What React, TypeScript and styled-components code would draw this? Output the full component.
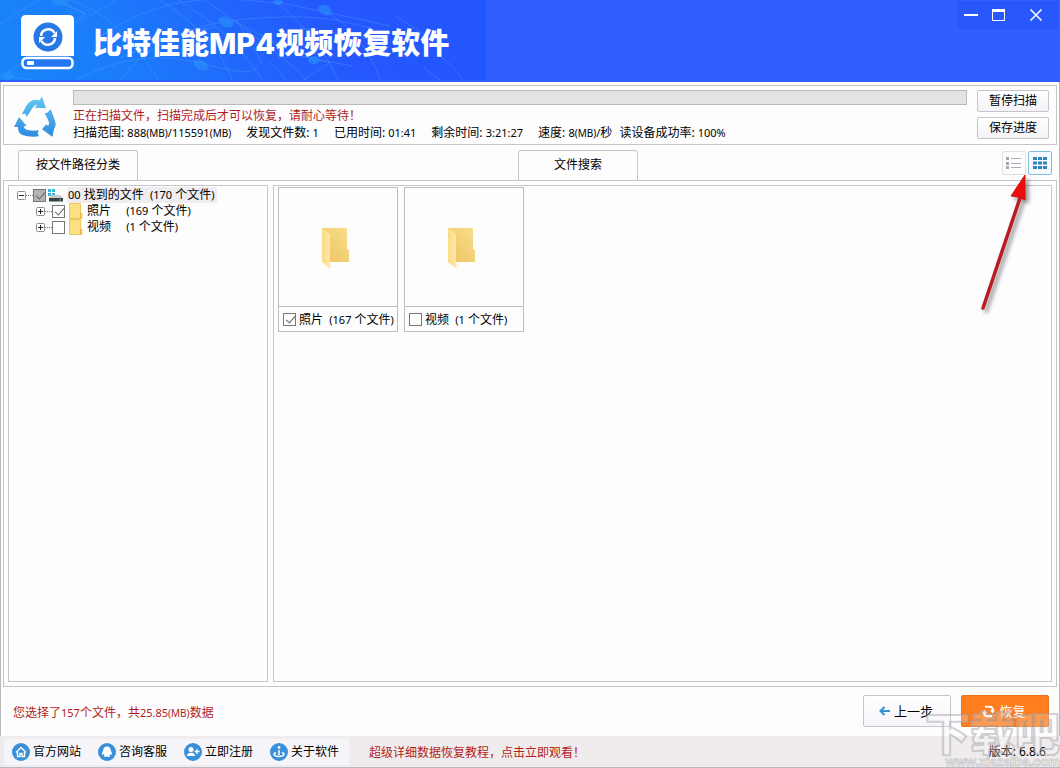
import React from "react";
import styled, { createGlobalStyle } from "styled-components";

const LINE = "#c6c6c8";
const RED = "#b01c1c";

const GlobalStyle = createGlobalStyle`
  * { box-sizing: border-box; }
  body { margin: 0; background: #fdfdfe; }
  body, button, input {
    font-family: "Noto Sans", "Noto Sans CJK SC", sans-serif;
    font-size: 12px;
    line-height: 16px;
    color: #000;
  }
  h1, p, ul { margin: 0; padding: 0; }
  ul { list-style: none; }
`;

const Window = styled.div`
  position: relative;
  display: flex;
  flex-direction: column;
  min-height: 100vh;
  overflow: hidden;
  background: #fdfdfe;
`;

const Header = styled.header`
  position: relative;
  display: flex;
  justify-content: space-between;
  align-items: flex-start;
  height: 82px;
  background: #305eff;
`;

const Banner = styled.div`
  position: relative;
  display: flex;
  align-items: center;
  gap: 18px;
  width: 486px;
  height: 80px;
  padding: 4px 0 0 20px;
  background: linear-gradient(62deg, #1985f8 0%, #1b7cfb 25%, #2263fc 52%, #2457fd 70%, #2456ff 100%);
`;

const Pattern = styled.svg`
  position: absolute;
  inset: 0;
`;

const Logo = styled.svg`
  position: relative;
  flex: none;
`;

const Title = styled.h1`
  position: relative;
  font-family: "Noto Sans CJK SC", sans-serif;
  font-size: 29px;
  font-weight: 900;
  line-height: 40px;
  white-space: nowrap;
  color: #fff;
`;

const TitleFormat = styled.span`
  font-family: Inter, sans-serif;
  font-weight: 800;
`;

const WindowControls = styled.div`
  display: flex;
  margin: 1px 2px 0 0;
  background: #2858fb;
`;

const ControlButton = styled.button<{ $width: number }>`
  display: flex;
  align-items: center;
  justify-content: center;
  width: ${(p) => p.$width}px;
  height: 28px;
  padding: 0;
  border: 0;
  background: none;
`;

const Body = styled.div`
  flex: 1;
  display: flex;
  flex-direction: column;
  padding: 3px 2px 0;
  border: solid #b9b9c2;
  border-width: 0 1px;
`;

const ScanPanel = styled.section`
  display: flex;
  height: 60px;
  padding: 4px 7px 0 8px;
  border: 1px solid ${LINE};
`;

const RecycleIcon = styled.svg`
  flex: none;
  margin-top: 5px;
`;

const ScanInfo = styled.div`
  flex: 1;
  margin-left: 15px;
`;

const ProgressTrack = styled.div`
  height: 15px;
  margin-bottom: 3px;
  border: 1px solid #b9b9b9;
  background: #e5e3e6;
`;

const Notice = styled.p`
  color: ${RED};
  white-space: nowrap;
`;

const Stats = styled.ul`
  display: flex;
  gap: 15px;
  margin-top: 1px;
  white-space: nowrap;
`;

const SpeedStats = styled.li`
  display: flex;
  gap: 7px;
`;

const Num = styled.span`
  font-size: 11px;
`;

const Unit = styled.span`
  font-size: 10px;
`;

const ScanButtons = styled.div`
  display: flex;
  flex-direction: column;
  gap: 5px;
  width: 72px;
  margin-left: 10px;
`;

const SmallButton = styled.button`
  height: 22px;
  padding: 0;
  border: 1px solid #c4c4ca;
  border-radius: 2px;
  background: linear-gradient(#fff, #f3f3f8);
`;

const TabBar = styled.div`
  display: flex;
  justify-content: space-between;
  margin: 5px 5px -1px 15px;
`;

const Tabs = styled.div`
  display: flex;
  gap: 380px;
`;

const Tab = styled.button<{ $active?: boolean }>`
  width: 120px;
  height: 31px;
  padding: 0 0 2px;
  border: 1px solid ${LINE};
  border-bottom-color: ${(p) => (p.$active ? "#fdfdfe" : LINE)};
  border-radius: 3px 3px 0 0;
  background: #fdfdfe;
`;

const ViewSwitch = styled.div`
  display: flex;
  gap: 2px;
  padding-top: 1px;
`;

const ViewButton = styled.button<{ $active?: boolean }>`
  display: flex;
  align-items: center;
  justify-content: center;
  width: 24px;
  height: 24px;
  padding: 0;
  border: 1px solid ${(p) => (p.$active ? "#85bde0" : "#dfdfe2")};
  border-radius: 2px;
  background: ${(p) => (p.$active ? "#f4faff" : "#fdfdfe")};
`;

const Browser = styled.main`
  flex: 1;
  display: grid;
  grid-template-columns: 260px 1fr;
  gap: 5px;
  padding: 4px;
  border: 1px solid ${LINE};
`;

const TreePane = styled.nav`
  padding: 1px 8px;
  border: 1px solid ${LINE};
`;

const TreeRow = styled.li<{ $child?: boolean }>`
  display: flex;
  align-items: center;
  height: 16px;
  padding-left: ${(p) => (p.$child ? 19 : 0)}px;
  white-space: nowrap;
`;

const Expander = styled.button`
  flex: none;
  display: block;
  width: 9px;
  height: 9px;
  padding: 0;
  border: 0;
  background: none;
  svg { display: block; }
`;

const Dots = styled.span`
  width: 7px;
  border-top: 1px dotted #777;
`;

const CheckBox = styled.input.attrs({ type: "checkbox" })<{ $partial?: boolean }>`
  appearance: none;
  flex: none;
  position: relative;
  width: 13px;
  height: 13px;
  margin: 0;
  border: 1px solid #777;
  background: ${(p) => (p.$partial ? "#b4b4b4" : "#fff")};
  &:checked::after {
    content: "";
    position: absolute;
    left: 4px;
    top: 0;
    width: 4px;
    height: 8px;
    border: solid #666;
    border-width: 0 1px 1px 0;
    transform: rotate(40deg);
  }
`;

const TreeLabel = styled.label<{ $selected?: boolean }>`
  display: flex;
  align-items: center;
  gap: 4px;
  margin-left: 2px;
  span.text {
    height: 16px;
    padding: 0 2px 0 1px;
    white-space: pre;
    background: ${(p) => (p.$selected ? "#efedf0" : "none")};
  }
`;

const ChildLabel = styled(TreeLabel)`
  gap: 3px;
  margin-left: 4px;
`;

const Count = styled.span`
  margin-left: 12px;
`;

const FilePane = styled.section`
  display: flex;
  flex-wrap: wrap;
  align-content: flex-start;
  gap: 6px;
  padding: 1px 4px;
  border: 1px solid ${LINE};
`;

const Card = styled.label`
  display: block;
  width: 120px;
  border: 1px solid #bdbdbd;
`;

const Thumb = styled.span`
  display: flex;
  align-items: center;
  justify-content: center;
  height: 118px;
  padding: 2px 4px 0 0;
`;

const CardCaption = styled.span`
  display: flex;
  align-items: center;
  gap: 3px;
  height: 25px;
  padding: 0 4px;
  border-top: 1px solid #bdbdbd;
  white-space: pre;
  span { padding-top: 1px; }
`;

const Actions = styled.div`
  display: flex;
  align-items: center;
  justify-content: space-between;
  height: 49px;
  padding: 0 8px 1px 10px;
`;

const Selection = styled(Notice)`
  padding-top: 3px;
`;

const ActionButtons = styled.div`
  display: flex;
  gap: 10px;
`;

const ActionButton = styled.button<{ $primary?: boolean }>`
  display: flex;
  align-items: center;
  justify-content: center;
  gap: 4px;
  width: 88px;
  height: 32px;
  padding: 0 2px 0 0;
  border: 1px solid ${(p) => (p.$primary ? "#e9741d" : "#c4c4ca")};
  border-radius: 2px;
  background: ${(p) => (p.$primary ? "#ff7d1f" : "linear-gradient(#fff, #f5f5fb)")};
  color: ${(p) => (p.$primary ? "#fff" : "#000")};
  font-size: 13px;
`;

const Footer = styled.footer`
  display: flex;
  align-items: center;
  height: 32px;
  padding: 0 14px 0 4px;
  border-bottom: 1px solid #b9b9c2;
  background: #f0eced;
`;

const FooterLinks = styled.nav`
  display: flex;
  gap: 17px;
  width: 345px;
  height: 26px;
  padding-left: 8px;
  background: #f5f5f9;
`;

const FooterLink = styled.a`
  display: flex;
  align-items: center;
  gap: 3px;
  color: #000;
  text-decoration: none;
  white-space: nowrap;
`;

const PromoLink = styled.a`
  margin-left: 20px;
  padding-top: 2px;
  color: ${RED};
  text-decoration: none;
`;

const Version = styled.span`
  margin-left: auto;
`;

const Pointer = styled.svg`
  position: absolute;
  top: 170px;
  right: 26px;
  pointer-events: none;
`;

const Watermark = styled.div`
  position: absolute;
  right: 0;
  bottom: 0;
  display: flex;
  flex-direction: column;
  align-items: flex-end;
  pointer-events: none;
  white-space: nowrap;
`;

const WatermarkName = styled.span`
  font-family: "Noto Sans CJK SC", sans-serif;
  font-size: 45px;
  font-weight: 900;
  line-height: 48px;
  color: rgba(255, 255, 255, 0.22);
  -webkit-text-stroke: 2px rgba(165, 165, 170, 0.5);
`;

const WatermarkUrl = styled.span`
  font-family: "Liberation Sans", sans-serif;
  font-size: 13px;
  font-weight: 700;
  line-height: 12px;
  color: rgba(255, 255, 255, 0.7);
  -webkit-text-stroke: 1px rgba(165, 165, 170, 0.5);
`;

const FolderSmall = () => (
  <svg width="14" height="16" viewBox="0 0 14 16">
    <path d="M0.5 0.5h11v9l1.5 1v5H0.5z" fill="#fbdf83" stroke="#edc65c" />
    <path d="M11.5 10v5" stroke="#e3b84a" />
  </svg>
);

const FolderLarge = ({ id }: { id: string }) => (
  <svg width="30" height="42" viewBox="0 0 30 42">
    <defs>
      <linearGradient id={`${id}-back`} x1="0" x2="1" y1="1" y2="0">
        <stop offset="0" stopColor="#eec35f" />
        <stop offset="1" stopColor="#f8de8d" />
      </linearGradient>
      <linearGradient id={`${id}-front`} x1="0" x2="1">
        <stop offset="0" stopColor="#fbdc85" />
        <stop offset="1" stopColor="#fde9ad" />
      </linearGradient>
    </defs>
    <path d="M1 1h25v21l2 1v11l1 1H9z" fill={`url(#${id}-back)`} />
    <path d="M1 1l8 6v29l1 5-3-1-6-5z" fill={`url(#${id}-front)`} />
  </svg>
);

const Expand = ({ open, label }: { open?: boolean; label: string }) => (
  <Expander aria-label={label}>
    <svg width="9" height="9" viewBox="0 0 9 9" fill="none">
      <rect x="0.5" y="0.5" width="8" height="8" rx="1" fill="#fff" stroke="#8c8c8c" />
      <path d={open ? "M2 4.5h5" : "M2 4.5h5M4.5 2v5"} stroke="#223" />
    </svg>
  </Expander>
);

const footerLinks = [
  {
    label: "官方网站",
    icon: <path d="M4 9.5L9 4.5l5 5M5.5 9v4.500h2.500v-3h2v3h2.500V9" fill="none" stroke="#fff" strokeWidth="1.400" />,
  },
  {
    label: "咨询客服",
    icon: <path d="M9 3.500c-2.600 0-3.800 1.900-3.800 4.200C4.300 9 3.700 10.600 4.200 12l1.300-.9c.2.700.6 1.200 1.100 1.700-.5.200-.7.500-.7.900h6.200c0-.4-.2-.7-.7-.9.500-.5.900-1 1.100-1.700l1.300.9c.5-1.400-.1-3-1-4.300 0-2.300-1.200-4.200-3.800-4.200z" fill="#fff" />,
  },
  {
    label: "立即注册",
    icon: (
      <>
        <circle cx="7" cy="6.500" r="2.500" fill="#fff" />
        <path d="M2.800 13c0-4.500 8.400-4.500 8.400 0z" fill="#fff" />
        <path d="M13 6v5M10.500 8.500h5" stroke="#fff" strokeWidth="1.400" />
      </>
    ),
  },
  {
    label: "关于软件",
    icon: (
      <>
        <circle cx="9" cy="4.500" r="1.400" fill="#fff" />
        <path d="M9 7v5M6 9.500c-4 1.500-1.500 4 3 4s7-2.500 3-4" fill="none" stroke="#fff" strokeWidth="1.500" />
      </>
    ),
  },
];

export default function App() {
  return (
    <Window>
      <GlobalStyle />
      <Header>
        <Banner>
          <Pattern width="486" height="80" viewBox="0 0 486 80" fill="none" aria-hidden="true">
            <g stroke="#54a4ff" strokeOpacity="0.35">
              <path d="M0 24L22 10 40 0M56 0L86 14 46 44M86 14L60 2M0 76L34 80M6 74L60 34 116 0" />
              <path d="M70 0C110 12 140 50 158 80M98 38C150 2 200 -8 280 4M120 80C150 42 190 22 260 18S340 22 372 28" />
              <path d="M160 0C190 20 220 45 232 80M178 0C215 22 240 45 262 80M205 0C225 14 290 60 306 80" />
              <path d="M76 80C110 62 150 50 205 64S250 70 262 62L240 26M92 42L110 30M120 58L172 34 216 27" />
              <path d="M276 2L326 12 390 26M276 2C300 20 325 50 338 80M326 12C350 25 370 50 380 80M310 60L330 62 304 80M270 62L286 80" />
              <path d="M395 16L440 44M424 68L440 80M440 56C450 64 458 72 463 80M232 20L300 56 352 66M300 28L360 36 410 56" />
            </g>
            <g fill="#2a93fa" fillOpacity="0.6">
              <ellipse cx="60" cy="1" rx="8" ry="5" />
              <ellipse cx="226" cy="22" rx="8" ry="5" transform="rotate(25 226 22)" />
              <ellipse cx="201" cy="65" rx="8" ry="5" transform="rotate(25 201 65)" />
              <ellipse cx="8" cy="76" rx="6" ry="4" />
              <ellipse cx="278" cy="2" rx="5" ry="3" />
              <ellipse cx="325" cy="10" rx="7" ry="5" transform="rotate(25 325 10)" />
              <ellipse cx="314" cy="60" rx="6" ry="4" />
            </g>
          </Pattern>
          <Logo width="55" height="56" viewBox="0 0 55 56" aria-hidden="true">
            <path d="M6 1h43q5 0 5 5v36H1V6q0-5 5-5z" fill="#fff" />
            <rect x="2.500" y="44" width="50" height="10" rx="4" fill="#2377f0" stroke="#fff" strokeWidth="2.500" />
            <rect x="7" y="47" width="7" height="4" rx="1" fill="#fff" />
            <circle cx="28" cy="23" r="14.500" fill="#2878e8" />
            <path d="M21 22a7.200 7.200 0 0 1 13.500-3M35 24a7.200 7.200 0 0 1-13.500 3" fill="none" stroke="#fff" strokeWidth="2.500" />
            <path d="M37 17v6h-6zM19 29v-6h6z" fill="#fff" />
          </Logo>
          <Title>比特佳能<TitleFormat>MP4</TitleFormat>视频恢复软件</Title>
        </Banner>
        <WindowControls>
          <ControlButton $width={27} aria-label="最小化">
            <svg width="14" height="12"><path d="M0 6h14" stroke="#fff" strokeWidth="2" /></svg>
          </ControlButton>
          <ControlButton $width={29} aria-label="最大化">
            <svg width="13" height="12"><path d="M0.500 1v10.500h12V1" fill="none" stroke="#fff" /><path d="M0 1.500h13" stroke="#fff" strokeWidth="3" /></svg>
          </ControlButton>
          <ControlButton $width={45} aria-label="关闭">
            <svg width="12" height="12"><path d="M0.500 0.500l11 11M11.500 0.500l-11 11" stroke="#fff" strokeWidth="1.500" /></svg>
          </ControlButton>
        </WindowControls>
      </Header>

      <Body>
        <ScanPanel>
          <RecycleIcon width="46" height="44" viewBox="12 14 138 132" aria-hidden="true">
            <defs>
              <linearGradient id="recycle" gradientUnits="userSpaceOnUse" x1="0" y1="18" x2="0" y2="142">
                <stop offset="0" stopColor="#62c8f2" />
                <stop offset="1" stopColor="#2f88de" />
              </linearGradient>
            </defs>
            <g fill="url(#recycle)">
              <path d="M41 72C48 62 53 44 66 34q12-9 28-4l8-11 12 35-34-2 8-9q-8-1-14 9L56 80l-4-10z" />
              <path d="M110 68l8-1 10-10 13 34q5 14-3 26l-5 22-31-22 13-15 5 5q5-6 2-14z" />
              <path d="M33 80l23 27-9 1q2 9 12 11l15 2 18-1-3 9 4 9q-28 3-48-3-16-6-15-25l-12 0z" />
            </g>
          </RecycleIcon>
          <ScanInfo>
            <ProgressTrack role="progressbar" aria-label="扫描进度" aria-valuenow={0} />
            <Notice>正在扫描文件，扫描完成后才可以恢复，请耐心等待！</Notice>
            <Stats>
              <li>扫描范围: <Num>888<Unit>(MB)</Unit>/115591<Unit>(MB)</Unit></Num></li>
              <li>发现文件数: <Num>1</Num></li>
              <li>已用时间: <Num>01:41</Num></li>
              <li>剩余时间: <Num>3:21:27</Num></li>
              <SpeedStats>
                <span>速度: <Num>8<Unit>(MB)</Unit>/</Num>秒</span>
                <span>读设备成功率: <Num>100%</Num></span>
              </SpeedStats>
            </Stats>
          </ScanInfo>
          <ScanButtons>
            <SmallButton>暂停扫描</SmallButton>
            <SmallButton>保存进度</SmallButton>
          </ScanButtons>
        </ScanPanel>

        <TabBar>
          <Tabs>
            <Tab $active>按文件路径分类</Tab>
            <Tab>文件搜索</Tab>
          </Tabs>
          <ViewSwitch>
            <ViewButton aria-label="列表视图">
              <svg width="16" height="12" viewBox="0 0 16 12">
                <path d="M0 1.500h3M0 6.500h3M0 10.500h3" stroke="#a5a5ae" strokeWidth="3" />
                <path d="M5 1.500h10M5 6.500h10M5 10.500h10" stroke="#a9a9b8" />
              </svg>
            </ViewButton>
            <ViewButton $active aria-label="缩略图视图">
              <svg width="14" height="12" viewBox="0 0 14 12">
                <path d="M0 1.500h14M0 6h14M0 10.500h14" stroke="#3384ba" strokeWidth="3" strokeDasharray="4 1" />
              </svg>
            </ViewButton>
          </ViewSwitch>
        </TabBar>

        <Browser>
          <TreePane>
            <ul>
              <TreeRow>
                <Expand open label="折叠" />
                <Dots />
                <CheckBox id="root-files" $partial defaultChecked />
                <TreeLabel htmlFor="root-files" $selected>
                  <svg width="15" height="14" viewBox="0 0 15 14">
                    <path d="M0 1h3v3H0zM4 1h3v3H4zM0 5h3v3H0zM4 5h3v3H4z" fill="#35b5d8" />
                    <path d="M3 7h9l3 3H1z" fill="#c5c9cb" />
                    <path d="M1 10h14v3.500H1z" fill="#384047" />
                    <path d="M11 12h2" stroke="#48e07c" />
                  </svg>
                  <span className="text"><Num>00</Num> 找到的文件  <Num>(170</Num> 个文件<Num>)</Num></span>
                </TreeLabel>
              </TreeRow>
              <TreeRow $child>
                <Expand label="展开照片" />
                <Dots />
                <CheckBox id="tree-photos" defaultChecked />
                <ChildLabel htmlFor="tree-photos">
                  <FolderSmall />
                  <span className="text">照片<Count> <Num>(169</Num> 个文件<Num>)</Num></Count></span>
                </ChildLabel>
              </TreeRow>
              <TreeRow $child>
                <Expand label="展开视频" />
                <Dots />
                <CheckBox id="tree-videos" />
                <ChildLabel htmlFor="tree-videos">
                  <FolderSmall />
                  <span className="text">视频<Count> <Num>(1</Num> 个文件<Num>)</Num></Count></span>
                </ChildLabel>
              </TreeRow>
            </ul>
          </TreePane>
          <FilePane>
            <Card>
              <Thumb><FolderLarge id="photos" /></Thumb>
              <CardCaption><CheckBox defaultChecked /><span>照片  <Num>(167</Num> 个文件<Num>)</Num></span></CardCaption>
            </Card>
            <Card>
              <Thumb><FolderLarge id="videos" /></Thumb>
              <CardCaption><CheckBox /><span>视频  <Num>(1</Num> 个文件<Num>)</Num></span></CardCaption>
            </Card>
          </FilePane>
        </Browser>

        <Actions>
          <Selection>您选择了<Num>157</Num>个文件，共<Num>25.85<Unit>(MB)</Unit></Num>数据</Selection>
          <ActionButtons>
            <ActionButton>
              <svg width="11" height="10" viewBox="0 0 11 10"><path d="M11 5H2M5.500 1L1.500 5l4 4" fill="none" stroke="#3092d2" strokeWidth="2" /></svg>
              上一步
            </ActionButton>
            <ActionButton $primary>
              <svg width="13" height="13" viewBox="0 0 13 13">
                <path d="M3 1.800h4.500q3.500 0 3.500 4M10 11.200H5.500q-3.500 0-3.500-4" fill="none" stroke="#fff" strokeWidth="2" />
                <path d="M8 5h5l-2.500 3.500zM0 8h5L2.500 4.500z" fill="#fff" />
              </svg>
              恢复
            </ActionButton>
          </ActionButtons>
        </Actions>
      </Body>

      <Footer>
        <FooterLinks>
          {footerLinks.map((link) => (
            <FooterLink href="#" key={link.label}>
              <svg width="18" height="18" viewBox="0 0 18 18">
                <circle cx="9" cy="9" r="9" fill="#3990d8" />
                {link.icon}
              </svg>
              {link.label}
            </FooterLink>
          ))}
        </FooterLinks>
        <PromoLink href="#">超级详细数据恢复教程，点击立即观看！</PromoLink>
        <Version>版本: 6.8.6</Version>
      </Footer>

      <Pointer width="60" height="150" viewBox="0 0 60 150" aria-hidden="true">
        <defs>
          <filter id="pointer-shadow" x="-50%" y="-20%" width="200%" height="140%">
            <feDropShadow dx="3" dy="3" stdDeviation="2" floodColor="#000" floodOpacity="0.45" />
          </filter>
        </defs>
        <g filter="url(#pointer-shadow)">
          <path d="M9 138L46 28" stroke="#b81c20" strokeWidth="3.500" strokeLinecap="round" />
          <path d="M51 5L51 30l-6-3-8-1z" fill="#ee1010" stroke="#d01010" />
        </g>
      </Pointer>
      <Watermark aria-hidden="true">
        <WatermarkName>下载吧</WatermarkName>
        <WatermarkUrl>www.xiazaiba.com</WatermarkUrl>
      </Watermark>
    </Window>
  );
}
